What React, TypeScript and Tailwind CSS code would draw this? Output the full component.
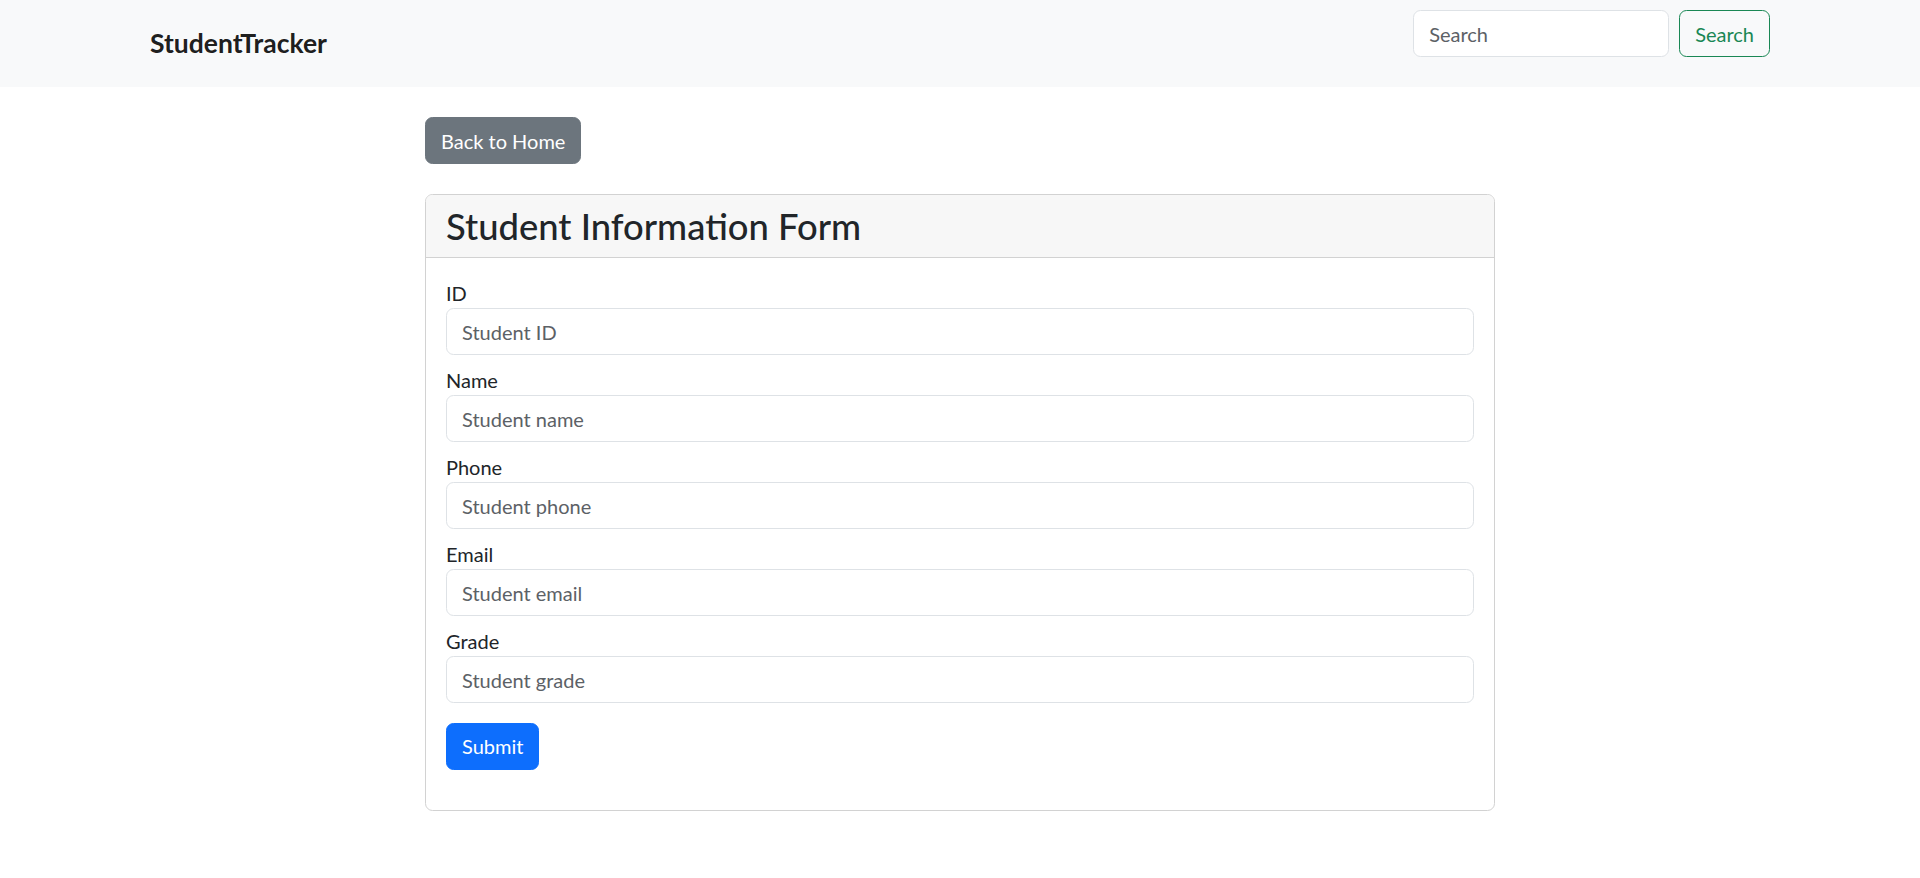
import React from "react";

const fields = [
  { label: "ID", placeholder: "Student ID" },
  { label: "Name", placeholder: "Student name" },
  { label: "Phone", placeholder: "Student phone" },
  { label: "Email", placeholder: "Student email" },
  { label: "Grade", placeholder: "Student grade" },
];

export default function App() {
  return (
    <div className="min-h-screen bg-white font-['Lato',sans-serif] text-[#212529]">
      <nav className="bg-[#f8f9fa]">
        <div className="mx-auto flex h-[87px] w-[1650px] items-start justify-between px-[15px] pt-[10px]">
          <a className="mt-[9px] py-[6px] text-[26.5px] font-bold leading-[37px] text-black/90" href="#">
            StudentTracker
          </a>
          <form className="flex" onSubmit={(e) => e.preventDefault()}>
            <input
              type="search"
              placeholder="Search"
              className="mr-[10px] h-[47px] w-[256px] rounded-[7.5px] border border-[#dee2e6] bg-white px-[15px] text-[20px] leading-[1.5] outline-none placeholder:text-[#5c6166]"
            />
            <button
              type="submit"
              className="h-[47px] rounded-[7.5px] border border-[#198754] px-[15px] text-[20px] leading-[1.5] text-[#198754]"
            >
              Search
            </button>
          </form>
        </div>
      </nav>

      <div className="mx-auto w-[1070px]">
        <button className="mt-[30px] h-[47px] rounded-[7.5px] border border-[#6c757d] bg-[#6c757d] px-[15px] text-[20px] leading-[1.5] text-white">
          Back to Home
        </button>

        <div className="mt-[30px] rounded-[7.5px] border border-[#d2d2d2] bg-white">
          <div className="rounded-t-[6.5px] border-b border-[#d2d2d2] bg-[#f7f7f7] px-[20px] py-[10px]">
            <h3 className="text-[36.4px] font-medium leading-[42px]">Student Information Form</h3>
          </div>
          <form className="p-[20px]" onSubmit={(e) => e.preventDefault()}>
            {fields.map((f) => (
              <div key={f.label} className="mb-[10px]">
                <label className="block text-[20px] leading-[30px]">{f.label}</label>
                <input
                  type="text"
                  placeholder={f.placeholder}
                  className="block h-[47px] w-full rounded-[7.5px] border border-[#dee2e6] bg-white px-[15px] text-[20px] leading-[1.5] outline-none placeholder:text-[#5c6166]"
                />
              </div>
            ))}
            <button
              type="submit"
              className="mb-[20px] mt-[9.5px] h-[47px] rounded-[7.5px] border border-[#0d6efd] bg-[#0d6efd] px-[15px] text-[20px] leading-[1.5] text-white"
            >
              Submit
            </button>
          </form>
        </div>
      </div>
    </div>
  );
}
